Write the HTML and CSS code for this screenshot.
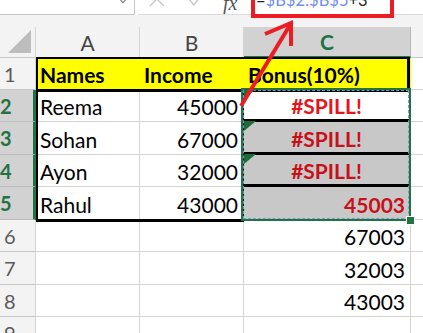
FILE: index.html
```html
<!DOCTYPE html>
<html lang="en">
<head>
    <meta charset="UTF-8">
    <title>Spill Error</title>
    <link rel="stylesheet" href="styles.css">
</head>
<body>
    <div class="topbar">
        <div class="namebox"><span class="chev"></span></div>
        <div class="tools">
            <svg class="icon" width="16" height="12" viewBox="0 0 16 12"><path d="M1 -8 L15 6 M15 -8 L1 6" stroke="#c8c8c8" stroke-width="1.4" fill="none"/></svg>
            <svg class="icon" width="16" height="12" viewBox="0 0 16 12"><path d="M1 -2 L7 5 L15 -6" stroke="#c8c8c8" stroke-width="1.4" fill="none"/></svg>
            <span class="fx">fx</span>
        </div>
        <div class="formula"><span class="ftext">=<span class="ref">$B$2:$B$5</span>+3</span></div>
        <div class="rest"></div>
    </div>
    <div class="gap"></div>

    <div class="sheet-wrap">
        <div class="sheet">
            <!-- column headers -->
            <div class="corner"><span class="tri"></span></div>
            <div class="colhead">A</div>
            <div class="colhead">B</div>
            <div class="colhead active">C</div>
            <div class="colhead edge"></div>

            <!-- row 1 -->
            <div class="rowhead">1</div>
            <div class="cell head">Names</div>
            <div class="cell head">Income</div>
            <div class="cell head">Bonus(10%)</div>
            <div class="cell edge"></div>

            <!-- row 2 -->
            <div class="rowhead sel">2</div>
            <div class="cell">Reema</div>
            <div class="cell num">45000</div>
            <div class="cell spill first">#SPILL!</div>
            <div class="cell edge"></div>

            <!-- row 3 -->
            <div class="rowhead sel">3</div>
            <div class="cell">Sohan</div>
            <div class="cell num">67000</div>
            <div class="cell spill shade">#SPILL!</div>
            <div class="cell edge"></div>

            <!-- row 4 -->
            <div class="rowhead sel">4</div>
            <div class="cell">Ayon</div>
            <div class="cell num">32000</div>
            <div class="cell spill shade">#SPILL!</div>
            <div class="cell edge"></div>

            <!-- row 5 -->
            <div class="rowhead sel">5</div>
            <div class="cell">Rahul</div>
            <div class="cell num">43000</div>
            <div class="cell num red shade">45003</div>
            <div class="cell edge"></div>

            <!-- row 6 -->
            <div class="rowhead">6</div>
            <div class="cell"></div>
            <div class="cell"></div>
            <div class="cell num">67003</div>
            <div class="cell edge"></div>

            <!-- row 7 -->
            <div class="rowhead">7</div>
            <div class="cell"></div>
            <div class="cell"></div>
            <div class="cell num">32003</div>
            <div class="cell edge"></div>

            <!-- row 8 -->
            <div class="rowhead">8</div>
            <div class="cell"></div>
            <div class="cell"></div>
            <div class="cell num">43003</div>
            <div class="cell edge"></div>

            <!-- row 9 -->
            <div class="rowhead">9</div>
            <div class="cell"></div>
            <div class="cell"></div>
            <div class="cell"></div>
            <div class="cell edge"></div>
        </div>

        <!-- borders and error flags drawn over the cells -->
        <div class="overlay">
            <div class="box-head"></div>
            <div class="box-data"></div>
            <div class="box-sel"><span class="ants"></span><span class="handle"></span></div>
            <div class="flag r2"></div>
            <div class="flag r3"></div>
            <div class="flag r4"></div>
        </div>
    </div>

    <svg class="arrow" width="423" height="333" viewBox="0 0 423 333">
        <path d="M241 106 L290 25" stroke="#ec1c24" stroke-width="4" fill="none"/>
        <path d="M265 34 L291 23 L291 46" stroke="#ec1c24" stroke-width="4" fill="none" stroke-linejoin="miter"/>
    </svg>
</body>
</html>
```

FILE: styles.css
```css
body {
    margin: 0;
    width: 423px;
    height: 333px;
    overflow: hidden;
    background-color: #f3f3f3;
    font-family: "Lato", "Liberation Sans", sans-serif;
    color: #000;
    position: relative;
}

/* formula bar */
.topbar {
    display: flex;
    height: 15px;
    background-color: #ffffff;
}
.namebox {
    width: 135px;
    border-right: 1px solid #c6c6c6;
    border-bottom: 1px solid #c6c6c6;
    box-sizing: border-box;
    position: relative;
}
.chev {
    position: absolute;
    right: 8px;
    top: -4px;
    width: 5px;
    height: 5px;
    border-right: 1px solid #777;
    border-bottom: 1px solid #777;
    transform: rotate(45deg);
}
.tools {
    width: 113px;
    margin-left: 3px;
    display: flex;
    align-items: flex-start;
    border-bottom: 1px solid #dcdcdc;
    box-sizing: border-box;
    padding-left: 11px;
    gap: 22px;
    overflow: hidden;
}
.tools .icon {
    display: block;
}
.fx {
    font-family: "Liberation Serif", serif;
    font-style: italic;
    font-size: 20px;
    line-height: 20px;
    margin-top: -7px;
    color: #555;
    margin-left: -2px;
}
.formula {
    width: 143px;
    height: 22px;
    margin-top: -4px;
    border: 4px solid #ec1c24;
    box-sizing: border-box;
    background-color: #fff;
    overflow: hidden;
    z-index: 2;
}
.ftext {
    display: block;
    font-size: 16.5px;
    line-height: 20px;
    margin-top: -10px;
    padding-left: 1px;
    color: #222;
    white-space: nowrap;
}
.ref {
    color: #6f8cf4;
}
.rest {
    flex: 1;
    border-bottom: 1px solid #dcdcdc;
}
.gap {
    height: 12px;
}

/* worksheet grid */
.sheet-wrap {
    position: relative;
}
.sheet, .overlay {
    display: grid;
    grid-template-columns: 36px 104px 104px 167px 12px;
    grid-template-rows: 31px 32px 32px 33px 32px 33px 32px 33px 32px 32px;
}
.sheet {
    background-color: #ffffff;
    font-size: 21px;
}
.overlay {
    position: absolute;
    left: 0;
    top: 0;
    pointer-events: none;
}
.corner, .colhead, .rowhead {
    background-color: #f3f3f3;
    color: #444;
    border-right: 1px solid #d4d4d4;
    border-bottom: 1px solid #c8c8c8;
    box-sizing: border-box;
}
.corner {
    position: relative;
}
.tri {
    position: absolute;
    right: 4px;
    bottom: 4px;
    width: 23px;
    height: 23px;
    background-color: #bdbdbd;
    clip-path: polygon(100% 0, 100% 100%, 0 100%);
}
.colhead {
    display: flex;
    align-items: center;
    justify-content: center;
}
.colhead.active {
    background-color: #d2d2d2;
    color: #217346;
    font-weight: bold;
    border-bottom: 2px solid #217346;
    border-right-color: #b8b8b8;
}
.colhead.edge {
    border-right: none;
}
.rowhead {
    display: flex;
    align-items: center;
    padding-left: 4px;
    font-size: 20px;
    color: #5a5a5a;
}
.rowhead.sel {
    background-color: #d2d2d2;
    color: #217346;
    font-weight: bold;
    padding-left: 0;
    border-right: 3px solid #217346;
    border-bottom-color: #bdbdbd;
}

.cell {
    display: flex;
    align-items: center;
    padding: 2px 5px 0 4px;
    border-right: 1px solid #d4d4d4;
    border-bottom: 1px solid #d4d4d4;
    box-sizing: border-box;
    white-space: nowrap;
}
.cell.edge {
    border-right: none;
}
.cell.head {
    background-color: #ffff00;
    font-weight: bold;
    border-right-color: #ffff00;
}
.cell.num {
    justify-content: flex-end;
}
.cell.spill {
    justify-content: center;
    color: #e8141c;
    font-weight: bold;
    border-bottom: 3px solid #000;
}
.cell.shade {
    background-color: #c8c8c8;
}
.cell.spill.shade, .cell.red {
    color: #c8101a;
}
.cell.red {
    font-weight: bold;
}

/* error indicator triangles */
.flag {
    grid-column: 4;
    width: 12px;
    height: 10px;
    margin-top: -1px;
    background-color: #1d6b38;
    clip-path: polygon(0 0, 100% 0, 0 100%);
}
.flag.r2 { grid-row: 3; }
.flag.r3 { grid-row: 4; }
.flag.r4 { grid-row: 5; }

/* table outlines */
.box-head {
    grid-row: 2;
    grid-column: 2 / 5;
    border: 2px solid #000;
    border-right-width: 3px;
    border-bottom-width: 3px;
    margin: -1px 1px -2px 0;
}
.box-data {
    grid-row: 3 / 7;
    grid-column: 2 / 4;
    border: 2px solid #000;
    border-bottom-width: 3px;
    border-top: none;
    margin: 0 0 -2px 0;
}
.box-sel {
    grid-row: 3 / 7;
    grid-column: 4 / 5;
    border: 2px solid #217346;
    margin: -2px 0 -1px -3px;
    position: relative;
}
.ants {
    position: absolute;
    inset: 0;
    border: 1px dashed #7a9cc8;
}
.handle {
    position: absolute;
    right: -6px;
    bottom: -6px;
    width: 7px;
    height: 7px;
    background-color: #217346;
    border: 1px solid #fff;
}

.arrow {
    position: absolute;
    left: 0;
    top: 0;
    pointer-events: none;
}
```
